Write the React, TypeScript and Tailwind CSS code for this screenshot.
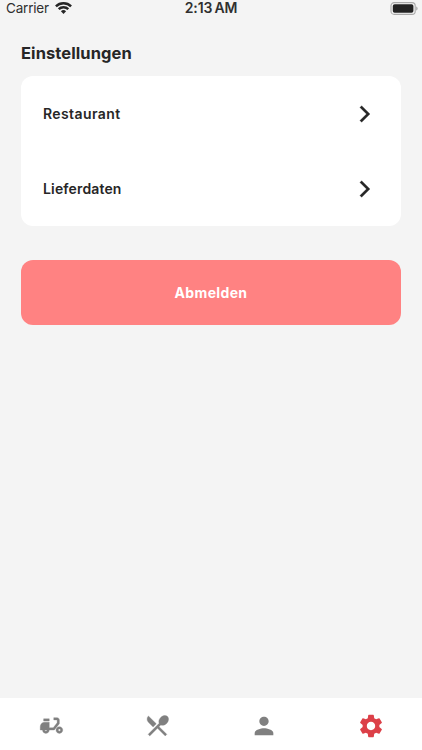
import type { ReactNode } from 'react';
import { MdDeliveryDining, MdPerson, MdRestaurantMenu, MdSettings } from 'react-icons/md';
import clsx from 'clsx';

const rows = [
  { label: 'Restaurant', tracking: 'tracking-[0.4px]' },
  { label: 'Lieferdaten', tracking: 'tracking-[0.15px]' },
];

const tabs: { id: string; icon: ReactNode; active?: boolean }[] = [
  { id: 'delivery', icon: <MdDeliveryDining size={27} stroke="currentColor" strokeWidth={0.3} /> },
  { id: 'menu', icon: <MdRestaurantMenu size={27} stroke="currentColor" strokeWidth={0.3} /> },
  { id: 'profile', icon: <MdPerson size={28} /> },
  { id: 'settings', icon: <MdSettings size={28} />, active: true },
];

function WifiIcon() {
  return (
    <svg width="17" height="12" viewBox="0 0 17 12" fill="none" stroke="#262626" strokeWidth="2.4" aria-hidden="true">
      <path d="M.9 4.4a10.8 10.8 0 0 1 15.2 0" />
      <path d="M3.7 7.2a6.8 6.8 0 0 1 9.6 0" />
      <path d="M8.5 11.9 5.9 9.3a3.7 3.7 0 0 1 5.2 0z" fill="#262626" stroke="none" />
    </svg>
  );
}

function BatteryIcon() {
  return (
    <svg width="28" height="13" viewBox="0 0 28 13" aria-hidden="true">
      <rect x="1" y=".6" width="24.2" height="11.8" rx="3.2" fill="none" stroke="#a9a9a9" strokeWidth="1.1" />
      <rect x="2.8" y="2.2" width="20.6" height="8.6" rx="1.8" fill="#222" />
      <path d="M26.2 4.4v4.2c.9-.4 1.4-1.2 1.4-2.1s-.5-1.7-1.4-2.1z" fill="#a9a9a9" />
    </svg>
  );
}

function Chevron() {
  return (
    <svg width="20" height="20" viewBox="0 0 24 24" fill="currentColor" stroke="currentColor" strokeWidth=".3" aria-hidden="true">
      <path d="M5.88 4.12 13.76 12l-7.88 7.88L8 22l10-10L8 2z" />
    </svg>
  );
}

function StatusBar() {
  return (
    <header className="grid h-4 grid-cols-3 items-center pr-1 pl-[6px] text-[#303030]">
      <div className="flex items-center gap-[6px]">
        <span className="text-[13.5px] leading-4 tracking-[-0.2px]">Carrier</span>
        <WifiIcon />
      </div>
      <span className="pr-[2px] text-center text-[14px] leading-4 font-semibold tracking-[-0.15px] [word-spacing:-1.2px]">
        2:13 AM
      </span>
      <div className="flex justify-end">
        <BatteryIcon />
      </div>
    </header>
  );
}

export default function App() {
  return (
    <div className="flex h-screen flex-col overflow-hidden bg-[#f4f4f4] font-['Inter',sans-serif] text-[#262626]">
      <StatusBar />

      <main className="flex-1 px-[21px] pt-[25px]">
        <h1 className="h-[35px] text-[16.5px] leading-6 font-bold tracking-[0.08px]">Einstellungen</h1>

        <div className="overflow-hidden rounded-[12px] bg-white">
          {rows.map(({ label, tracking }) => (
            <button
              key={label}
              className="flex h-[75px] w-full items-center justify-between pr-[26px] pl-[22px] text-[14px] font-semibold"
            >
              <span className={tracking}>{label}</span>
              <Chevron />
            </button>
          ))}
        </div>

        <button className="mt-[34px] h-[64.5px] w-full rounded-[12px] bg-[#ff8282] text-[14px] font-bold tracking-[0.35px] text-white">
          Abmelden
        </button>
      </main>

      {/* the icons carry a transparent bounding path that must stay unstroked */}
      <nav className="-mx-[2px] flex h-[52px] bg-white pt-[3px] [&_path[fill=none]]:stroke-none">
        {tabs.map((tab) => (
          <button
            key={tab.id}
            aria-label={tab.id}
            className={clsx('flex flex-1 items-center justify-center', tab.active ? 'text-[#dc4048]' : 'text-[#808080]')}
          >
            {tab.icon}
          </button>
        ))}
      </nav>
    </div>
  );
}
